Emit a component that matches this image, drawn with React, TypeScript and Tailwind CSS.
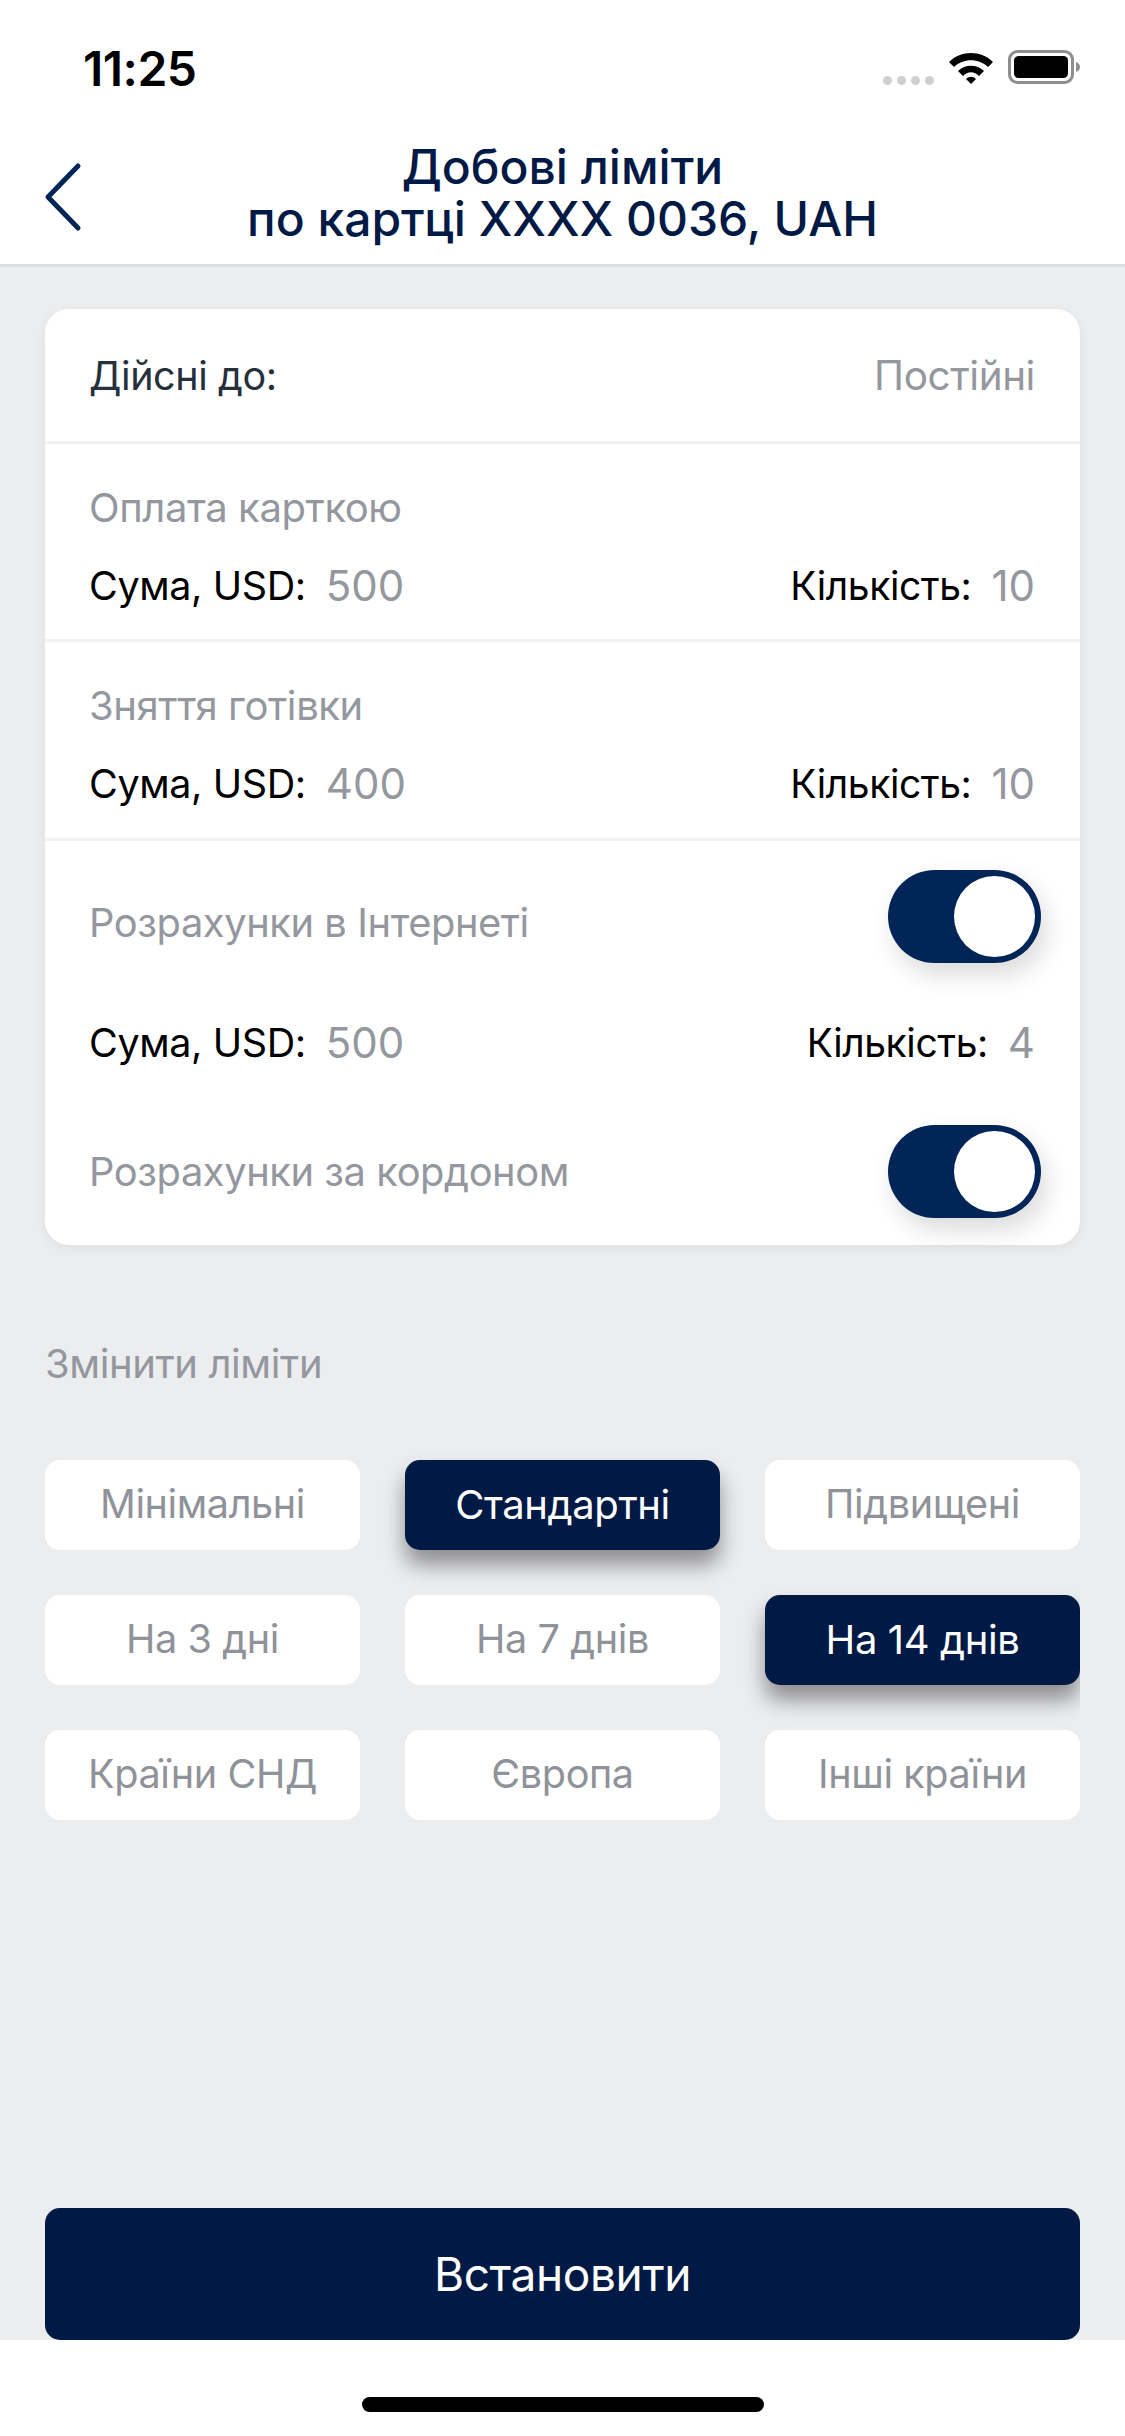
const font = "[font-family:Inter,'Noto_Sans',sans-serif]";

function Toggle() {
  return (
    <div className="flex h-[93px] w-[153px] items-center justify-end rounded-full bg-[#012557] pr-[6px] shadow-[6px_12px_24px_rgba(0,0,0,0.14)]">
      <div className="size-[81px] rounded-full bg-white" />
    </div>
  );
}

function Stat({ sum, count }: { sum: string; count: string }) {
  return (
    <div className="flex items-center justify-between text-[39.5px] leading-[48px] tracking-[-0.4px]">
      <div className="flex items-center gap-[20px]">
        <span className="text-black">Сума, USD:</span>
        <span className="text-[42px] tracking-[0px] text-[#94979e]">{sum}</span>
      </div>
      <div className="flex items-center gap-[20px]">
        <span className="text-[39px] text-black">Кількість:</span>
        <span className="text-[42px] tracking-[0px] text-[#94979e]">{count}</span>
      </div>
    </div>
  );
}

function Choice({ label, active }: { label: string; active?: boolean }) {
  return (
    <div
      className={
        active
          ? "flex h-[90px] items-center justify-center rounded-[15px] bg-[#001945] text-[40px] tracking-[-0.4px] text-white shadow-[0_15px_21px_rgba(0,0,0,0.4)]"
          : "flex h-[90px] items-center justify-center rounded-[15px] bg-white text-[39.6px] tracking-[-0.4px] text-[#8f9299]"
      }
    >
      {label}
    </div>
  );
}

export default function App() {
  return (
    <div className={`flex h-[2436px] w-[1125px] flex-col overflow-hidden bg-[#ecedef] ${font}`}>
      <header className="h-[267px] shrink-0 border-b-[3px] border-[#dcdddf] bg-white">
        <div className="flex h-[136px] items-start justify-between pl-[83px] pr-[45px] pt-[45px]">
          <span className="text-[48px] font-semibold leading-[48px] tracking-[-0.5px] text-black">11:25</span>
          <div className="flex items-start gap-[14px] pt-[5px]">
            <div className="mt-[26px] flex gap-[5px]">
              <span className="size-[9px] rounded-full bg-[#cfcfcf]" />
              <span className="size-[9px] rounded-full bg-[#cfcfcf]" />
              <span className="size-[9px] rounded-full bg-[#cfcfcf]" />
              <span className="size-[9px] rounded-full bg-[#cfcfcf]" />
            </div>
            <svg width="46" height="34" viewBox="0 0 46 34" className="mt-[1px]">
              <path d="M1 11 C13 -1 33 -1 45 11 L40 16 C31 7 15 7 6 16 Z" fill="#000" />
              <path d="M10 20 C17 13 29 13 36 20 L31 25 C26 20 20 20 15 25 Z" fill="#000" />
              <path d="M18 28 C21 25 25 25 28 28 L23 33 Z" fill="#000" />
            </svg>
            <svg width="72" height="34" viewBox="0 0 72 34">
              <rect x="1.5" y="1.5" width="63" height="31" rx="8" fill="none" stroke="#8e8e8e" strokeWidth="3" />
              <rect x="6" y="6" width="54" height="22" rx="4.5" fill="#000" />
              <path d="M68 12 C71 13 72 15 72 17 C72 19 71 21 68 22 Z" fill="#8e8e8e" />
            </svg>
          </div>
        </div>
        <div className="relative flex flex-col items-center pt-[5px] text-[48px] font-medium leading-[52px] tracking-[0px] text-[#001945]">
          <svg width="40" height="72" viewBox="0 0 40 72" className="absolute left-[43px] top-[25px]">
            <path d="M35 5 L5 36 L35 67" fill="none" stroke="#012557" strokeWidth="5" strokeLinecap="round" strokeLinejoin="round" />
          </svg>
          <span>Добові ліміти</span>
          <span>по картці XXXX 0036, UAH</span>
        </div>
      </header>

      <main className="flex min-h-0 flex-1 flex-col px-[45px] pt-[42px]">
        <section className="flex h-[936px] flex-col rounded-[24px] bg-white shadow-[0_3px_12px_rgba(0,0,0,0.06)]">
          <div className="flex h-[135px] items-center justify-between border-b-[3px] border-[#f1f2f3] pl-[44px] pr-[45px] pt-[3px] text-[39.5px] tracking-[-0.4px]">
            <span className="text-[#26303c]">Дійсні до:</span>
            <span className="text-[40.4px] text-[#94979e]">Постійні</span>
          </div>
          <div className="flex h-[198px] flex-col gap-[30px] border-b-[3px] border-[#f1f2f3] pl-[44px] pr-[45px] pt-[40px]">
            <span className="text-[40px] leading-[48px] tracking-[-0.4px] text-[#94979e]">Оплата карткою</span>
            <Stat sum="500" count="10" />
          </div>
          <div className="flex h-[199px] flex-col gap-[30px] border-b-[3px] border-[#f1f2f3] pl-[44px] pr-[45px] pt-[40px]">
            <span className="text-[40px] leading-[48px] tracking-[-0.4px] text-[#94979e]">Зняття готівки</span>
            <Stat sum="400" count="10" />
          </div>
          <div className="flex flex-1 flex-col pl-[44px] pr-[39px] pt-[29px]">
            <div className="flex items-center justify-between">
              <span className="pt-[12px] text-[39.8px] tracking-[-0.4px] text-[#94979e]">Розрахунки в Інтернеті</span>
              <Toggle />
            </div>
            <div className="mt-[56px] pr-[6px]">
              <Stat sum="500" count="4" />
            </div>
            <div className="mt-[58px] flex items-center justify-between">
              <span className="text-[39.8px] tracking-[-0.4px] text-[#94979e]">Розрахунки за кордоном</span>
              <Toggle />
            </div>
          </div>
        </section>

        <h2 className="mt-[95px] text-[40px] font-normal leading-[48px] tracking-[-0.4px] text-[#94979e]">Змінити ліміти</h2>

        <div className="mt-[72px] grid grid-cols-3 gap-x-[45px] gap-y-[45px] overflow-x-clip">
          <Choice label="Мінімальні" />
          <Choice label="Стандартні" active />
          <Choice label="Підвищені" />
          <Choice label="На 3 дні" />
          <Choice label="На 7 днів" />
          <Choice label="На 14 днів" active />
          <Choice label="Країни СНД" />
          <Choice label="Європа" />
          <Choice label="Інші країни" />
        </div>

        <button className="mt-auto flex h-[132px] shrink-0 items-center justify-center rounded-[15px] bg-[#001945] text-[46px] tracking-[-0.4px] text-white">
          Встановити
        </button>
      </main>

      <footer className="flex h-[96px] shrink-0 justify-center bg-white pt-[57px]">
        <div className="h-[15px] w-[402px] rounded-full bg-black" />
      </footer>
    </div>
  );
}
